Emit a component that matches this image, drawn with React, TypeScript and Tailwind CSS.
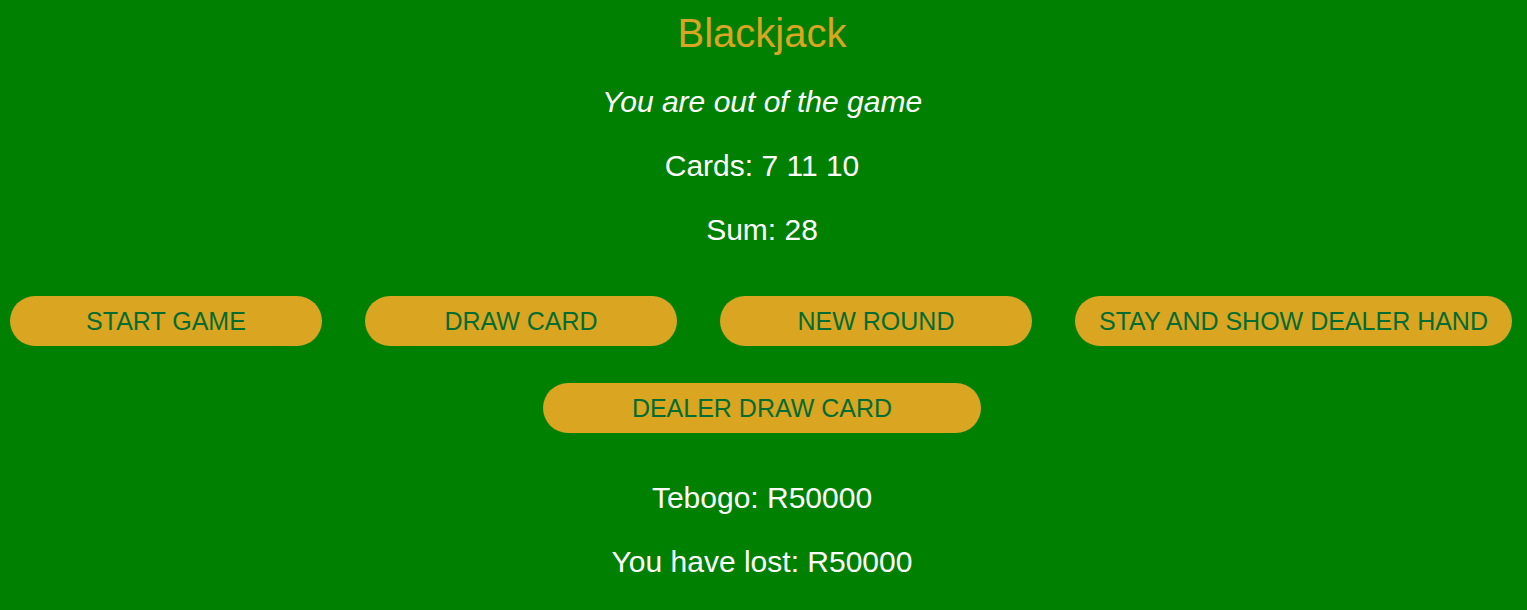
import React from "react";

export default function App() {
  const btn =
    "h-[50px] rounded-[25px] bg-[#daa520] text-[#026c33] text-[25px] leading-none uppercase flex items-center justify-center";
  return (
    <div
      className="min-h-[610px] w-full bg-[#008000] text-white flex flex-col items-center pt-[10px] pl-[10px] pr-[13px]"
      style={{ fontFamily: '"Liberation Sans", Arial, sans-serif' }}
    >
      <h1 className="text-[40px] leading-[46px] text-[#daa520] font-normal">Blackjack</h1>
      <p className="mt-[29px] text-[30px] leading-[34px] italic">You are out of the game</p>
      <p className="mt-[30px] text-[30px] leading-[34px]">Cards: 7 11 10</p>
      <p className="mt-[30px] text-[30px] leading-[34px]">Sum: 28</p>
      <div className="mt-[49px] flex gap-[43px] self-start">
        <button className={`${btn} w-[312px]`}>Start Game</button>
        <button className={`${btn} w-[312px]`}>Draw Card</button>
        <button className={`${btn} w-[312px]`}>New Round</button>
        <button className={`${btn} w-[437px]`}>Stay and show dealer hand</button>
      </div>
      <button className={`${btn} w-[438px] mt-[37px]`}>Dealer draw card</button>
      <p className="mt-[48px] text-[30px] leading-[34px]">Tebogo: R50000</p>
      <p className="mt-[30px] text-[30px] leading-[34px]">You have lost: R50000</p>
    </div>
  );
}
